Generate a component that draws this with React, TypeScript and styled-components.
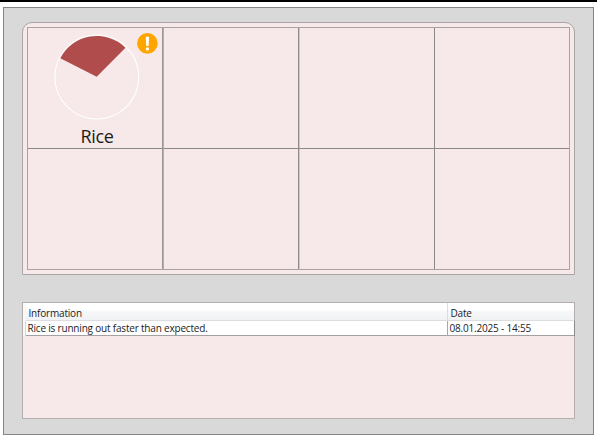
import React from "react";
import styled, { createGlobalStyle } from "styled-components";

const GlobalStyle = createGlobalStyle`
  * { box-sizing: border-box; }
  body {
    margin: 0;
    background: #fff;
    overflow: hidden;
    font-family: "Open Sans", "Noto Sans", sans-serif;
    color: #1c1c1c;
  }
`;

const Page = styled.div`
  width: 597px;
  height: 436px;
  border-top: 2px solid #000;
  padding: 5px 2px 1px 3px;
`;

const Frame = styled.main`
  height: 428px;
  width: 591px;
  display: flex;
  flex-direction: column;
  gap: 27px;
  padding: 14px 18px 0;
  border: 1px solid #858585;
  background: #d9d9d9;
`;

const Shelf = styled.section`
  width: 553px;
  height: 253px;
  padding: 4px;
  border: 1px solid #aaa6a7;
  border-radius: 10px 10px 0 0;
  background: #f7e9e9;
`;

const Grid = styled.div`
  width: 543px;
  height: 243px;
  display: grid;
  grid-template-columns: 136px 135px 136px 134px;
  grid-template-rows: 121px 120px;
  border: 1px solid #aaa3a4;
`;

const Cell = styled.div<{ $right?: string; $shade?: string; $bottom?: boolean }>`
  display: flex;
  flex-direction: column;
  position: relative;
  border-right: ${(p) => (p.$right ? `1px solid ${p.$right}` : "0")};
  border-bottom: ${(p) => (p.$bottom ? "1px solid #8b8889" : "0")};
  box-shadow: ${(p) => p.$shade ?? "none"};
`;

const Pie = styled.svg`
  display: block;
  width: 86px;
  height: 86px;
  margin: 6px 0 0 26px;
`;

const ItemName = styled.div`
  width: 138px;
  margin-top: 4px;
  text-align: center;
  font-size: 18px;
  letter-spacing: -0.3px;
  line-height: 24px;
`;

const Alert = styled.svg`
  position: absolute;
  left: 109px;
  top: 5px;
  width: 21px;
  height: 21px;
`;

const Log = styled.section`
  width: 553px;
  height: 117px;
  border: 1px solid #b5aeaf;
  background: #f7e9e9;
`;

const Row = styled.div<{ $header?: boolean }>`
  display: grid;
  grid-template-columns: 3px 421px 127px;
  height: ${(p) => (p.$header ? "18px" : "15px")};
  line-height: ${(p) => (p.$header ? "20px" : "15px")};
  font-size: 10px;
  letter-spacing: -0.19px;
  background: ${(p) =>
    p.$header ? "linear-gradient(#fff 0 42%, #f7f8fa 46%, #f1f2f4)" : "#fff"};
  border-bottom: 1px solid ${(p) => (p.$header ? "#dcdddf" : "#a5a0a1")};
`;

const RowMarker = styled.div<{ $line: string }>`
  background: #fbfafa;
  border-right: 1px solid ${(p) => p.$line};
`;

const Field = styled.div<{ $indent: number; $line?: string; $end?: boolean }>`
  padding-left: ${(p) => p.$indent}px;
  white-space: nowrap;
  border-left: ${(p) => (p.$line ? `1px solid ${p.$line}` : "0")};
  border-right: ${(p) => (p.$end ? "1px solid #8b8889" : "0")};
  margin-right: ${(p) => (p.$end ? "-1px" : "0")};
`;

const cells = Array.from({ length: 8 }, (_, i) => i);
const dividers = ["#b5aeaf", "#8f8b8c", "#8b8889", undefined];
const shades = ["inset -1px 0 #9b9697", "1px 0 #d0c8c8", undefined, undefined];

export default function App() {
  return (
    <>
      <GlobalStyle />
      <Page>
        <Frame>
          <Shelf>
            <Grid>
              {cells.map((i) => (
                <Cell key={i} $right={dividers[i % 4]} $shade={shades[i % 4]} $bottom={i < 4}>
                  {i === 0 && (
                    <>
                      <Pie viewBox="0 0 86 86">
                        <circle cx="42.8" cy="43" r="42" fill="none" stroke="#fff" strokeWidth="1.1" />
                        <path d="M42.7 42.7 L6.3 24.2 A41 41 0 0 1 71.5 13.7 Z" fill="#b04c4c" />
                      </Pie>
                      <ItemName>Rice</ItemName>
                      <Alert viewBox="0 0 21 21">
                        <circle cx="10.4" cy="10.4" r="10.3" fill="#ffa500" />
                        <path d="M8.8 3.8h3.2l-.4 9.2H9.2z" fill="#fff" />
                        <circle cx="10.4" cy="15.9" r="1.65" fill="#fff" />
                      </Alert>
                    </>
                  )}
                </Cell>
              ))}
            </Grid>
          </Shelf>
          <Log>
            <Row $header>
              <RowMarker $line="#f7f7f8" />
              <Field $indent={2.5}>Information</Field>
              <Field $indent={2.5} $line="#dcdddf">Date</Field>
            </Row>
            <Row>
              <RowMarker $line="#d8d4d5" />
              <Field $indent={1.5}>Rice is running out faster than expected.</Field>
              <Field $indent={1.5} $line="#aaa5a6" $end>08.01.2025 - 14:55</Field>
            </Row>
          </Log>
        </Frame>
      </Page>
    </>
  );
}
